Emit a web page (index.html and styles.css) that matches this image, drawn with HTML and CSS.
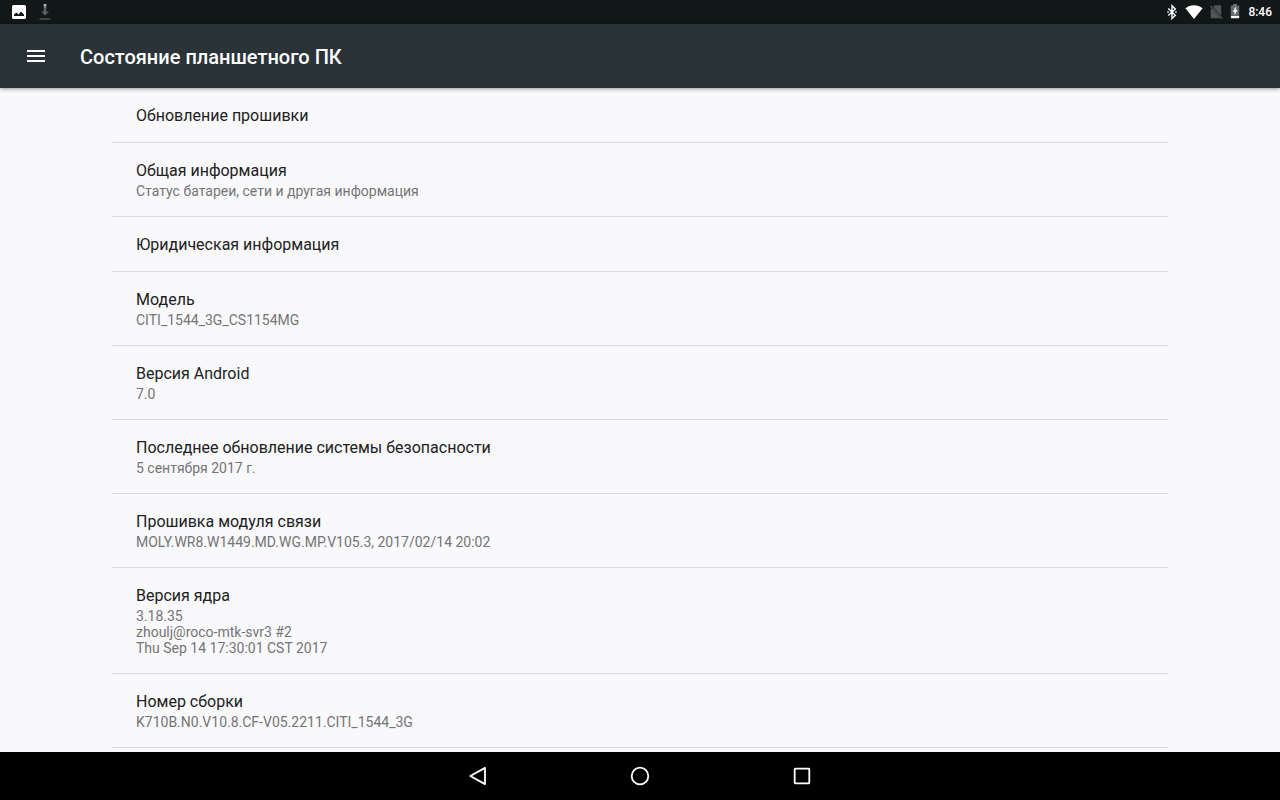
FILE: index.html
```html
<!DOCTYPE html>
<html lang="ru">
<head>
  <meta charset="UTF-8">
  <meta name="viewport" content="width=device-width, initial-scale=1.0">
  <title>Состояние планшетного ПК</title>
  <link rel="stylesheet" href="styles.css">
</head>
<body>
  <!-- Status bar -->
  <div class="status-bar">
    <div class="notifications">
      <svg width="14" height="14" viewBox="0 0 14 14">
        <rect width="14" height="14" rx="1.5" fill="#fff"/>
        <path d="M2 11V9.500L4.500 7.500l2 2L9 6.600l3 3V11z" fill="#121718"/>
      </svg>
      <svg width="14" height="16" viewBox="0 0 14 16">
        <path d="M5.700 4h2.600v3.500H11l-4 4-4-4h2.700z" fill="#5c5f60"/>
        <path d="M5.700 0h2.600v2H5.700z" fill="#b4b7b7"/>
        <path d="M5.700 2h2.600v2H5.700z" fill="#777a7b"/>
        <path d="M1.500 14h11v2h-11z" fill="#3d4142"/>
      </svg>
    </div>
    <div class="system-icons">
      <svg width="12" height="16" viewBox="0 0 12 16">
        <path d="M2.300 4.600l7 6.600L6 14.500V1.700l3.300 3.200-7 6.500" fill="none" stroke="#fff" stroke-width="1.400"/>
        <path d="M1.300 7.200h1.500v1.600H1.300zM9.200 7.200h1.500v1.600H9.200z" fill="#fff"/>
      </svg>
      <svg width="18" height="16" viewBox="0 0 18 16">
        <path d="M9 15L.4 4.200C2.900 2.200 5.800 1.200 9 1.200s6.100 1 8.600 3z" fill="#fff"/>
      </svg>
      <svg width="13" height="16" viewBox="0 0 13 16">
        <path d="M4.900 1.200h5.300q1 0 1 1v9.600L3.100 3zM1.700 4.500L10.800 14.200H1.700q-1 0-1-1V5.500z" fill="#505556"/>
        <path d="M.5 2l11.700 12.500" stroke="#505556" stroke-width="1.300"/>
      </svg>
      <svg width="10" height="16" viewBox="0 0 10 16">
        <path d="M3 0h4v1.500h1.500q.7 0 .7.700V12H.8V2.200q0-.7.700-.7H3z" fill="#666b6c"/>
        <path d="M.8 12h8.400v1.500q0 .7-.7.700h-7q-.7 0-.7-.7z" fill="#fff"/>
        <path d="M5.800 2.500L2.700 7.700h1.800v3.500l3-5.200H5.800z" fill="#fff"/>
      </svg>
      <time class="clock">8:46</time>
    </div>
  </div>

  <!-- App bar -->
  <header class="app-bar">
    <button class="menu-button" type="button" aria-label="Меню">
      <svg width="18" height="12" viewBox="0 0 18 12">
        <path d="M0 0h18v2H0zM0 5h18v2H0zM0 10h18v2H0z" fill="#fff"/>
      </svg>
    </button>
    <h1>Состояние планшетного ПК</h1>
  </header>

  <!-- Settings list -->
  <main class="content">
    <ul class="settings-list">
      <li><h2>Обновление прошивки</h2></li>
      <li>
        <h2>Общая информация</h2>
        <p>Статус батареи, сети и другая информация</p>
      </li>
      <li><h2>Юридическая информация</h2></li>
      <li>
        <h2>Модель</h2>
        <p>CITI_1544_3G_CS1154MG</p>
      </li>
      <li>
        <h2>Версия Android</h2>
        <p>7.0</p>
      </li>
      <li>
        <h2>Последнее обновление системы безопасности</h2>
        <p>5 сентября 2017 г.</p>
      </li>
      <li>
        <h2>Прошивка модуля связи</h2>
        <p>MOLY.WR8.W1449.MD.WG.MP.V105.3, 2017/02/14 20:02</p>
      </li>
      <li>
        <h2>Версия ядра</h2>
        <p>3.18.35<br>zhoulj@roco-mtk-svr3 #2<br>Thu Sep 14 17:30:01 CST 2017</p>
      </li>
      <li>
        <h2>Номер сборки</h2>
        <p>K710B.N0.V10.8.CF-V05.2211.CITI_1544_3G</p>
      </li>
    </ul>
  </main>

  <!-- Navigation bar -->
  <nav class="nav-bar">
    <button type="button" aria-label="Назад">
      <svg width="20" height="20" viewBox="0 0 20 20">
        <path d="M17 1.900v16.200L2.300 10z" fill="none" stroke="#fff" stroke-width="1.800" stroke-linejoin="round"/>
      </svg>
    </button>
    <button type="button" aria-label="Главный экран">
      <svg width="20" height="20" viewBox="0 0 20 20">
        <circle cx="10" cy="10" r="8.300" fill="none" stroke="#fff" stroke-width="1.800"/>
      </svg>
    </button>
    <button type="button" aria-label="Обзор">
      <svg width="20" height="20" viewBox="0 0 20 20">
        <rect x="2.700" y="2.700" width="14.600" height="14.600" rx=".5" fill="none" stroke="#fff" stroke-width="1.800"/>
      </svg>
    </button>
  </nav>
</body>
</html>
```

FILE: styles.css
```css
:root {
  --bg-color: #f9f9fb;
  --bar-color: #2a3338;
  --status-color: #121718;
  --text-color: #212122;
  --summary-color: #747476;
  --divider-color: #dadadc;
}

* {
  box-sizing: border-box;
}

body {
  display: flex;
  flex-direction: column;
  height: 100vh;
  margin: 0;
  font-family: Roboto, "Noto Sans", sans-serif;
  background-color: var(--bg-color);
  color: var(--text-color);
}

svg {
  display: block;
}

button {
  display: flex;
  align-items: center;
  justify-content: center;
  padding: 0;
  border: none;
  background: none;
  cursor: pointer;
}

.status-bar {
  display: flex;
  flex-shrink: 0;
  align-items: center;
  justify-content: space-between;
  height: 24px;
  padding: 0 8px 0 12px;
  background-color: var(--status-color);
  color: #fff;
}

.notifications {
  display: flex;
  align-items: center;
  gap: 12px;
}

.system-icons {
  display: flex;
  align-items: center;
  gap: 7px;
}

.clock {
  padding-left: 1px;
  font-size: 12px;
  font-weight: 500;
  line-height: 16px;
}

.app-bar {
  display: flex;
  flex-shrink: 0;
  align-items: center;
  gap: 20px;
  height: 64px;
  padding: 0 12px;
  background-color: var(--bar-color);
  color: #fff;
  box-shadow: 0 1px 4px rgba(0, 0, 0, 0.4);
  z-index: 1;
}

.menu-button {
  width: 48px;
  height: 48px;
}

.app-bar h1 {
  margin: 0;
  padding-top: 2px;
  font-size: 20px;
  font-weight: 500;
  line-height: 24px;
}

.content {
  flex: 1;
  min-height: 0;
  padding: 0 112px;
  overflow-y: auto;
  scrollbar-width: none;
}

.settings-list {
  margin: 0;
  padding: 0;
  list-style: none;
}

.settings-list li {
  padding: 17px 24px 15px;
  border-bottom: 1px solid var(--divider-color);
}

.settings-list h2 {
  margin: 0;
  font-size: 16px;
  font-weight: 400;
  line-height: 22px;
}

.settings-list p {
  margin: 1px 0 2px;
  color: var(--summary-color);
  font-size: 14px;
  line-height: 16px;
}

.nav-bar {
  display: flex;
  flex-shrink: 0;
  justify-content: center;
  gap: 82px;
  height: 48px;
  background-color: #000;
}

.nav-bar button {
  width: 80px;
}
```
